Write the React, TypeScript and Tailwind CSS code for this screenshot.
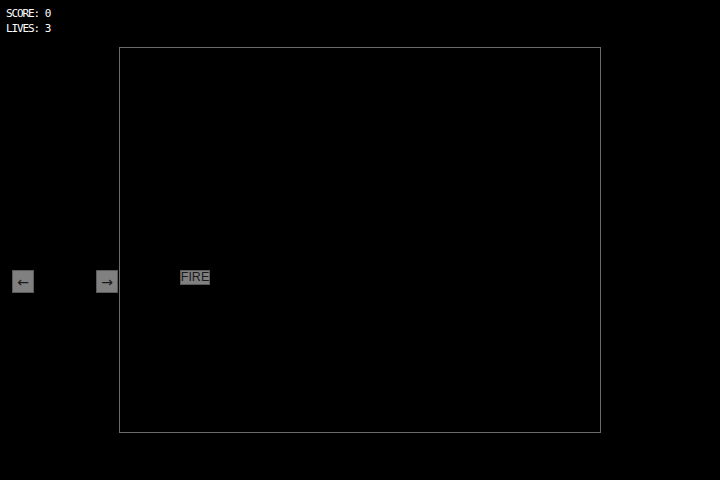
export default function App() {
  return (
    <div className="relative w-[720px] h-[480px] bg-black overflow-hidden">
      <div className="absolute left-[6px] top-[6px] text-white text-[11px] leading-[15px] tracking-[-1.1px] font-['DejaVu_Sans_Mono',monospace]">
        <div>SCORE: 0</div>
        <div>LIVES: 3</div>
      </div>

      <div className="flex h-full items-center justify-center">
        <div className="w-[482px] h-[386px] border border-[#6b6b6b] bg-black" />
      </div>

      <div className="absolute left-[12px] top-[270px] flex items-start">
        <button className="w-[22px] h-[23px] bg-[#808080] border border-[#5a5a5a] text-[#1a1a1a] text-[14px] leading-none flex items-center justify-center font-['DejaVu_Sans',sans-serif]">
          ←
        </button>
        <button className="ml-[62px] w-[22px] h-[23px] bg-[#808080] border border-[#5a5a5a] text-[#1a1a1a] text-[14px] leading-none flex items-center justify-center font-['DejaVu_Sans',sans-serif]">
          →
        </button>
        <button className="ml-[62px] w-[30px] h-[15px] bg-[#808080] border border-[#5a5a5a] text-[#1a1a1a] text-[12.5px] leading-none flex items-center justify-center font-['Liberation_Sans_Narrow','Liberation_Sans',sans-serif]">
          FIRE
        </button>
      </div>
    </div>
  );
}
